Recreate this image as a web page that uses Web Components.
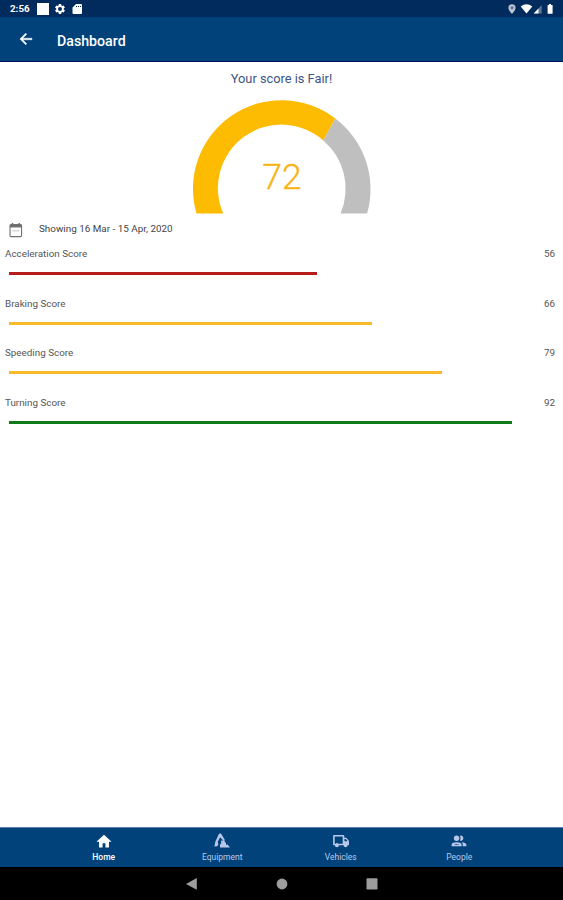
<!DOCTYPE html>
<html lang="en">
<head>
<meta charset="utf-8">
<title>Dashboard</title>
<style>
html,body{margin:0;height:100%;background:#fff;overflow:hidden}
body{font-family:Roboto,"Liberation Sans",sans-serif}
</style>
</head>
<body>
<score-app></score-app>
<script>
function define(name, render) {
  customElements.define(name, class extends HTMLElement {
    connectedCallback() {
      if (this.shadowRoot) return;
      const t = document.createElement('template');
      t.innerHTML = render(this);
      this.attachShadow({mode: 'open'}).append(t.content.cloneNode(true));
    }
  });
}

define('status-bar', () => `
<style>
:host{display:flex;align-items:center;height:17px;padding:1px 8px 0 10px;box-sizing:border-box;background:#002b5c;color:#fff;font-size:9.800px;font-weight:700;line-height:16px}
svg{display:block;fill:#fff}
.sq{width:12px;height:12px;background:#fff;margin:0 5px 0 7px}
.sp{flex:1}
</style>
<span>2:56</span><span class="sq"></span>
<svg width="12" height="12" viewBox="0 0 24 24"><path d="M19.4 13a7.800 7.800 0 0 0 0-2l2.100-1.600a.5.5 0 0 0 .1-.6l-2-3.500a.5.5 0 0 0-.6-.2l-2.500 1a7.300 7.300 0 0 0-1.700-1l-.4-2.600a.5.5 0 0 0-.5-.4h-4a.5.5 0 0 0-.5.4L9 5.100a7.300 7.300 0 0 0-1.700 1l-2.500-1a.5.5 0 0 0-.6.2l-2 3.500a.5.5 0 0 0 .1.6L4.500 11a7.800 7.800 0 0 0 0 2l-2.100 1.600a.5.5 0 0 0-.1.6l2 3.500c.1.2.4.3.6.2l2.500-1c.5.4 1.100.7 1.700 1l.4 2.600c0 .2.2.4.5.4h4c.3 0 .5-.2.5-.4l.4-2.600a7.300 7.300 0 0 0 1.700-1l2.500 1c.2.1.5 0 .6-.2l2-3.500a.5.5 0 0 0-.1-.6zM12 16a4 4 0 1 1 0-8 4 4 0 0 1 0 8z" fill-rule="evenodd"/></svg>
<svg width="12" height="12" viewBox="0 0 24 24" style="margin-left:5px"><path d="M20 2H10L3 9v11a2 2 0 0 0 2 2h15a2 2 0 0 0 2-2V4a2 2 0 0 0-2-2zM12 8h-2V6h2zm4 0h-2V6h2zm4 0h-2V6h2z" fill-rule="evenodd"/></svg>
<span class="sp"></span>
<svg width="48" height="12" viewBox="0 0 48 12"><path d="M5 1.200a3.600 3.600 0 0 0-3.600 3.600C1.400 7.500 5 11 5 11s3.600-3.500 3.600-6.200A3.600 3.600 0 0 0 5 1.200z" fill="#b8c2d2"/><circle cx="5" cy="4.800" r="1.500" fill="#5c7392"/><path d="M13.700 3.400Q19.500-.8 25.300 3.400L19.500 10.500z"/><path d="M34.700 2v8.500h-8z" fill="#5c7699"/><path d="M31.500 5.500v5h-4.800z"/><path d="M40.600 2h1.500V1h2v1h1.500v8.800h-5z"/></svg>`);

define('app-bar', () => `
<style>
:host{display:flex;align-items:center;height:45px;box-sizing:border-box;padding:1px 0 0 18px;background:#01427a;border-bottom:1px solid #00105f;color:#fff}
svg{display:block;width:16px;height:16px;margin-top:-1px;fill:#fff;stroke:#fff;stroke-width:.6}
h1{margin:2px 0 0 23px;font-size:14.200px;font-weight:500;line-height:18px}
</style>
<svg viewBox="0 0 24 24"><path d="M21 10.800H7.200l5.900-5.900L11.500 3.300 2.800 12l8.700 8.700 1.600-1.600-5.900-5.900H21z"/></svg>
<h1><slot></slot></h1>`);

define('score-gauge', el => `
<style>
:host{display:block}
svg{display:block;margin:0 auto}
text{font-size:35.500px;font-weight:300;fill:#f9b414;stroke:#f9b414;stroke-width:.3}
</style>
<svg width="563" height="115" viewBox="0 99 563 115">
<path fill="#fdbb02" d="M196.500 213.500A88.500 88.500 0 0 1 335.300 118.500L323.300 140.400A63.500 63.500 0 0 0 223.200 213.500z"/>
<path fill="#bfbfbf" d="M335.300 118.500A88.500 88.500 0 0 1 367.100 213.500H340.600A63.500 63.500 0 0 0 323.300 140.400z"/>
<text x="282" y="189" text-anchor="middle">${el.getAttribute('value')}</text>
</svg>`);

define('date-range', () => `
<style>
:host{display:flex;align-items:center;height:20px;padding:0 9px;color:#444;font-size:9.900px}
svg{display:block;width:14px;height:16px;margin-top:-1px}
span{margin:-2px 0 0 16px;line-height:14px;white-space:nowrap}
</style>
<svg viewBox="0 0 14 16" fill="none" stroke="#707070" stroke-width="1.100"><rect x="1" y="2.600" width="11.600" height="12" rx="1"/><path d="M1 4.200h11.600" stroke-width="2.500"/><path d="M3.500 1v2M10.200 1v2" stroke-width="1.500"/><path d="M3 8.800h7.600" stroke="#d0d0d0" stroke-width="1.200"/></svg>
<span><slot></slot></span>`);

define('score-row', el => `
<style>
:host{display:block;height:49.600px}
.line{display:flex;justify-content:space-between;padding:0 8px 0 5px;font-size:9.850px;line-height:14px;color:#555}
.track{margin:11px 9px 0;height:3px}
.bar{height:100%;width:${el.getAttribute('width')}px;background:${el.getAttribute('color')}}
</style>
<div class="line"><slot></slot><span>${el.getAttribute('value')}</span></div>
<div class="track"><div class="bar"></div></div>`);

define('nav-item', el => `
<style>
:host{display:flex;flex-direction:column;align-items:center;width:118.500px;color:${el.hasAttribute('active') ? '#fff' : '#b9c8ea'}}
::slotted(svg){display:block;width:18px;height:16px;fill:currentColor}
span{font-size:8.500px;line-height:10px;margin-top:3px;font-weight:${el.hasAttribute('active') ? 500 : 400}}
</style>
<slot></slot><span>${el.getAttribute('label')}</span>`);

define('bottom-nav', () => `
<style>
:host{display:flex;justify-content:center;height:40px;box-sizing:border-box;padding-top:5px;background:#01427a;border-top:1px solid #5f7da8}
</style>
<nav-item label="Home" active><svg viewBox="0 0 18 16"><path d="M9 1.700 1.400 8.800H4V14.500H7.600V10.300H10.400V14.500H14V8.800H16.600z"/></svg></nav-item>
<nav-item label="Equipment"><svg viewBox="0 0 18 16"><path d="M1.300 13.400 2.500 8.300 6 .8 8 .6 12 7.200 10.700 8 7.200 4.200 4.700 8.800 5.400 11.200 4.200 13.200z"/><path d="M7 14.400V11.600L8.200 10.600V7.600H11L13 10.200V11.800L14.600 11.600 17 14.400z"/></svg></nav-item>
<nav-item label="Vehicles"><svg viewBox="0 0 18 16"><path fill-rule="evenodd" d="M2.200 2H11.200Q12.300 2 12.300 3.100V4.800H14.400L17 8V12.300H15.600A2 2 0 0 1 11.600 12.300H6.900A2 2 0 0 1 2.900 12.300H1.100V3.100Q1.100 2 2.200 2zM2.700 3.600V10.700H3.400Q4.900 9.300 6.400 10.700H10.700V3.600zM12.500 6V8.300H15.500L13.800 6z"/></svg></nav-item>
<nav-item label="People"><svg viewBox="0 0 18 16"><circle cx="6.600" cy="5.200" r="2.700"/><path d="M10 2.700a2.600 2.600 0 1 1 0 5Q11.200 5.200 10 2.700z"/><path fill-rule="evenodd" d="M1.600 13.200V11.500Q2.200 9.200 6.600 9.200T11.600 11.500V13.200zM4 12.100H9.200Q8.700 11.200 6.600 11.200T4 12.100z"/><path d="M11.600 9.300Q15.800 9.600 16.400 11.600V13.200H12.700V11.500Q12.700 10.200 11.600 9.300z"/></svg></nav-item>`);

define('system-nav', () => `
<style>
:host{display:flex;align-items:center;justify-content:center;gap:78px;height:33px;background:#000}
svg{display:block;width:12px;height:12px;fill:#9d9d9d}
</style>
<svg viewBox="0 0 12 12"><path d="M10.800 0V11.800L0 6z"/></svg>
<svg viewBox="0 0 12 12"><circle cx="6" cy="6" r="5.400"/></svg>
<svg viewBox="0 0 12 12"><rect x=".5" y=".2" width="11" height="11.300" rx=".7"/></svg>`);

define('score-app', () => `
<style>
:host{display:flex;flex-direction:column;width:563px;height:900px;background:#fff}
main{flex:1;min-height:0}
h2{margin:9px 0 12px;text-align:center;font-size:12.800px;font-weight:400;line-height:16px;color:#3d5488}
date-range{margin-top:6px}
.rows{margin-top:7px}
</style>
<status-bar></status-bar>
<app-bar>Dashboard</app-bar>
<main>
<h2>Your score is Fair!</h2>
<score-gauge value="72"></score-gauge>
<date-range>Showing 16 Mar - 15 Apr, 2020</date-range>
<div class="rows">
<score-row value="56" width="308" color="#b71c1c">Acceleration Score</score-row>
<score-row value="66" width="362.500" color="#fbb829">Braking Score</score-row>
<score-row value="79" width="432.500" color="#fbb829">Speeding Score</score-row>
<score-row value="92" width="502.500" color="#0f7a1a">Turning Score</score-row>
</div>
</main>
<bottom-nav></bottom-nav>
<system-nav></system-nav>`);
</script>
</body>
</html>
